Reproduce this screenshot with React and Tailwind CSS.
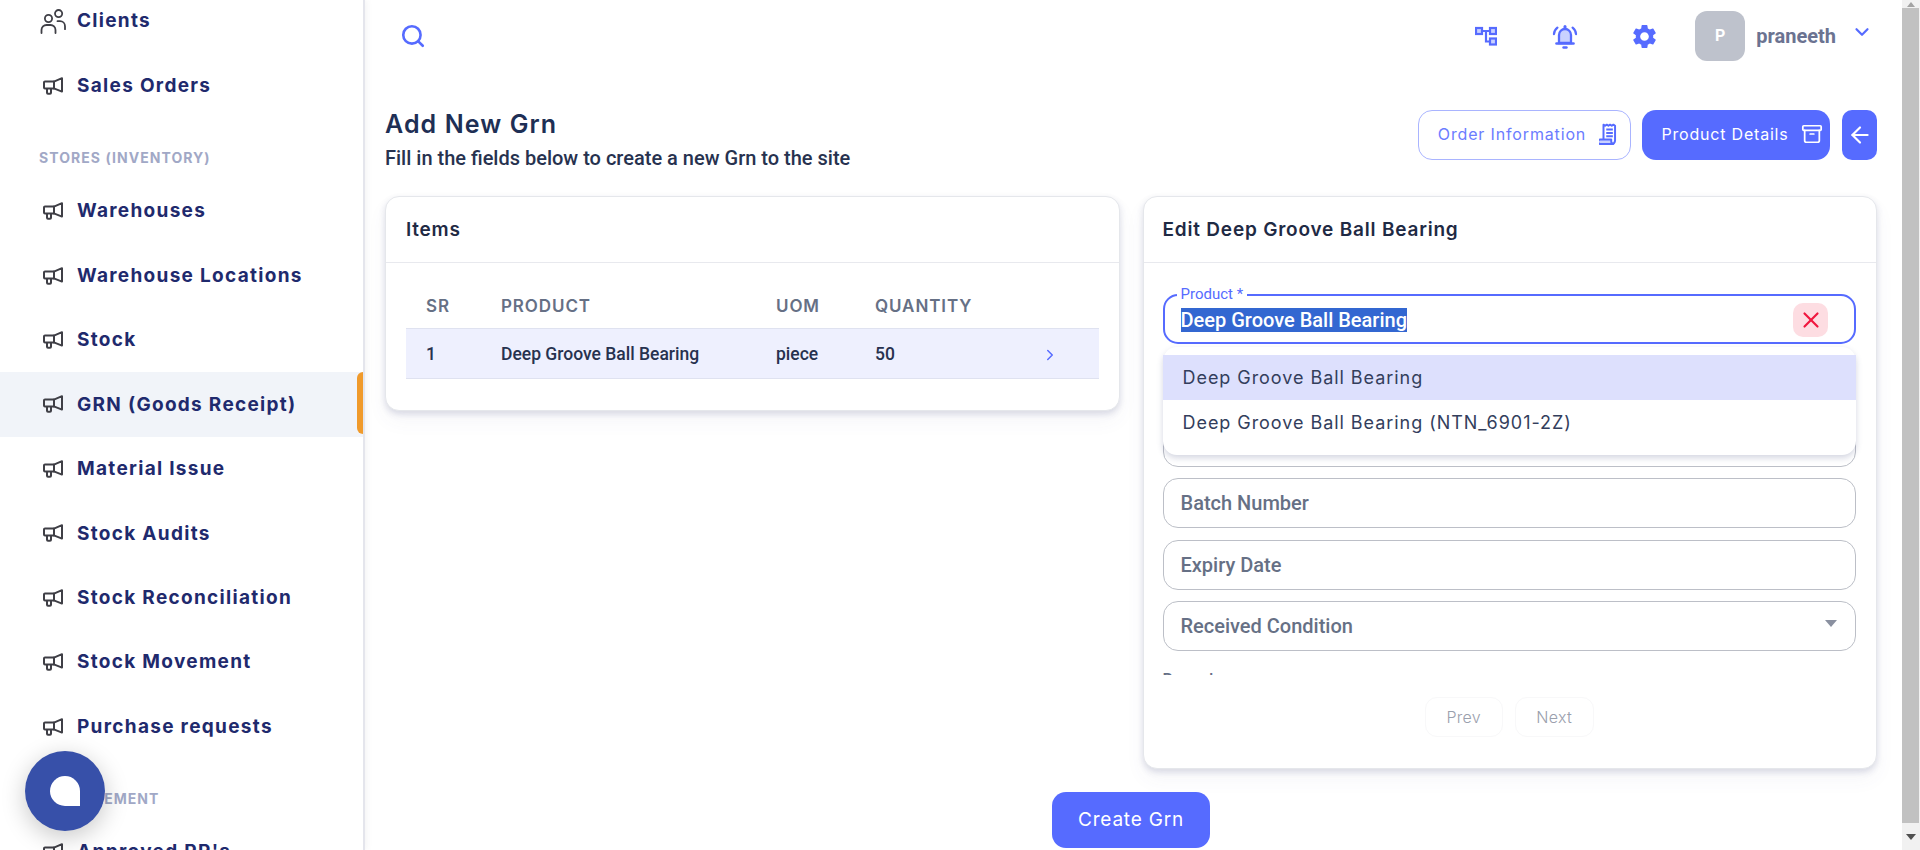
import React from "react";
import { Search, ChevronDown, ChevronRight, Archive, ArrowLeft, X } from "lucide-react";
import { MdSettings } from "react-icons/md";

const mont = "font-['Inter',sans-serif]";
const robo = "font-['Roboto',sans-serif]";

function Horn() {
  return (
    <svg width="20" height="18" viewBox="0 0 20 18" fill="none" stroke="#3f3f46" strokeWidth="2" strokeLinejoin="round" strokeLinecap="round">
      <path d="M19 1.2V14.6L11.5 11.6H2a1 1 0 0 1-1-1V5.4a1 1 0 0 1 1-1h9.5Z" />
      <path d="M11 4.6V11.4" />
      <path d="M4 12v3.8a1 1 0 0 0 1 1h2a1 1 0 0 0 1-1V12" />
    </svg>
  );
}

function People() {
  return (
    <svg width="26" height="26" viewBox="0 0 26 26" fill="none" stroke="#3f3f46" strokeWidth="1.8" strokeLinecap="round" className="-ml-[3px]">
      <circle cx="8.5" cy="10.5" r="3.6" />
      <circle cx="18.6" cy="5.6" r="3.6" />
      <path d="M1.5 25v-3a5 5 0 0 1 5-5h4a5 5 0 0 1 5 5v3" />
      <path d="M17.5 13.2h2.5a5 5 0 0 1 5 5v3" />
    </svg>
  );
}

function NavRow({ label, active, people }) {
  return (
    <div className={`relative flex h-[64.45px] items-center pl-[43px] ${active ? "bg-[#f1f4f9]" : ""}`}>
      <span className="flex w-[34px] shrink-0 items-center">{people ? <People /> : <Horn />}</span>
      <span className={`${mont} whitespace-nowrap pt-[1px] text-[19px] font-bold tracking-[1.3px] text-[#1f2a6d]`}>{label}</span>
      {active && <span className="absolute right-0 top-0 h-[62px] w-[6px] rounded-l-[6px] bg-[#f09a2b]" />}
    </div>
  );
}

function Heading({ children }) {
  return (
    <div className={`flex h-[61px] items-center pl-[39px] pt-[18px] ${mont} text-[14px] font-bold tracking-[1.05px] text-[#a1a8c6]`}>
      {children}
    </div>
  );
}

function Field({ label, caret }) {
  return (
    <div className="relative flex h-[50px] shrink-0 items-center rounded-[15px] border border-[#bcbfc7] bg-white px-[17px]">
      <span className={`${robo} text-[20px] font-medium text-[#667085]`}>{label}</span>
      {caret && <span className="absolute right-[18px] top-[18px] h-0 w-0 border-x-[6px] border-t-[7px] border-x-transparent border-t-[#8a90a0]" />}
    </div>
  );
}

export default function App() {
  const stores = ["Warehouses", "Warehouse Locations", "Stock"];
  const stores2 = ["Material Issue", "Stock Audits", "Stock Reconciliation", "Stock Movement", "Purchase requests"];
  return (
    <div className="relative flex h-[850px] w-full overflow-hidden bg-white">
      <aside className="w-[365px] shrink-0 overflow-hidden border-r-2 border-[#e4e5ec] bg-white shadow-[2px_0_6px_rgba(60,60,90,0.06)]">
        <div className="-mt-[11px]">
          <NavRow label="Clients" people />
          <NavRow label="Sales Orders" />
          <Heading>STORES (INVENTORY)</Heading>
          {stores.map((s) => <NavRow key={s} label={s} />)}
          <NavRow label="GRN (Goods Receipt)" active />
          {stores2.map((s) => <NavRow key={s} label={s} />)}
          <Heading>PROCUREMENT</Heading>
          <NavRow label="Approved PR's" />
        </div>
      </aside>

      <main className="min-w-0 flex-1 pl-[20px] pr-[25px]">
        <header className="flex h-[72px] items-center justify-between">
          <Search size={26} strokeWidth={2.4} className="ml-[15px] text-[#566bff]" />
          <div className="flex items-center">
            <svg width="22" height="20" viewBox="0 0 22 20" fill="none" stroke="#566bff" strokeWidth="2.2" className="mr-[55px]">
              <rect x="1" y="2" width="6" height="6" fill="#c9d1ff" />
              <rect x="15" y="2" width="6" height="6" fill="#c9d1ff" />
              <rect x="15" y="12.5" width="6" height="6" fill="#c9d1ff" />
              <path d="M7 5h8M11 5v10.5h4" />
            </svg>
            <svg width="26" height="28" viewBox="0 0 26 28" fill="none" stroke="#566bff" strokeWidth="2.3" strokeLinecap="round" className="mr-[52px]">
              <path d="M7 21V13a6 6 0 0 1 12 0v8Z" fill="#c9d1ff" />
              <path d="M4.5 21.5h17" strokeWidth="2.6" />
              <path d="M13 4.5V5.5" strokeWidth="3" />
              <path d="M11.5 25.5h3" strokeWidth="2.4" />
              <path d="M2 12a9 9 0 0 1 3.4-6.4M24 12a9 9 0 0 0-3.4-6.4" />
            </svg>
            <MdSettings size={29} className="mr-[36px] text-[#566bff]" />
            <div className={`mr-[11px] flex h-[50px] w-[50px] items-center justify-center rounded-[12px] bg-[#bec2cc] ${robo} text-[16px] font-bold text-white`}>P</div>
            <span className={`${robo} mr-[15px] text-[20px] font-bold leading-none text-[#6b7391]`}>praneeth</span>
            <ChevronDown size={22} strokeWidth={2.4} className="mb-[9px] mr-[4px] text-[#566bff]" />
          </div>
        </header>

        <section className="flex h-[124px] items-start justify-between">
          <div className="pt-[36px]">
            <h1 className={`${mont} text-[25px] font-semibold leading-[32px] tracking-[1.1px] text-[#1e2f55]`}>Add New Grn</h1>
            <p className={`${robo} mt-[4px] text-[20px] font-medium leading-[28px] text-[#27324f]`}>Fill in the fields below to create a new Grn to the site</p>
          </div>
          <div className="flex items-center pt-[38px]">
            <button className={`mr-[11px] flex h-[50px] w-[213px] items-center justify-center gap-[13px] rounded-[14px] border border-[#a9b4ff] bg-white pb-[2px] pl-[8px] ${mont} text-[16px] tracking-[0.85px] text-[#6b7cff]`}>
              Order Information
              <svg width="20" height="22" viewBox="0 0 18 20" fill="none" stroke="#566bff" strokeWidth="1.8" strokeLinejoin="round">
                <path d="M4 15V1.5l1.5 1 1.5-1 1.5 1 1.5-1 1.5 1 1.5-1 1.5 1V16a3 3 0 0 1-3 3H3.5" />
                <path d="M1 19a2 2 0 0 1 0-4h10v1.5a2.5 2.5 0 0 0 2 2.5Z" fill="#c9d1ff" />
                <path d="M6.5 6h6M6.5 9h6M6.5 12h6" />
              </svg>
            </button>
            <button className={`mr-[12px] flex h-[50px] w-[188px] items-center justify-center gap-[12px] rounded-[14px] bg-[#566bff] pb-[2px] pl-[12px] ${mont} text-[16px] tracking-[0.8px] text-white`}>
              Product Details
              <Archive size={22} strokeWidth={1.9} />
            </button>
            <button className="flex h-[50px] w-[35px] items-center justify-center rounded-[10px] bg-[#566bff] text-white">
              <ArrowLeft size={26} strokeWidth={2} />
            </button>
          </div>
        </section>

        <section className="grid grid-cols-2 items-start gap-[23px]">
          <div className="rounded-[14px] border border-[#e5e7eb] bg-white shadow-[0_3px_6px_rgba(70,80,130,0.18),0_10px_20px_rgba(70,80,130,0.05)]">
            <div className="flex h-[66px] items-center border-b border-[#e8e9ee] px-[20px] pt-[1px]">
              <h2 className={`${mont} text-[19px] font-semibold tracking-[0.75px] text-[#1f2a44]`}>Items</h2>
            </div>
            <div className="px-[20px] pb-[31px] pt-[22px]">
              <div className={`grid h-[43px] grid-cols-[95px_275px_99px_1fr] items-center ${mont} text-[17px] font-semibold tracking-[0.9px] text-[#667085]`}>
                <span className="pl-[20px]">SR</span>
                <span>PRODUCT</span>
                <span>UOM</span>
                <span>QUANTITY</span>
              </div>
              <div className={`grid h-[51px] grid-cols-[95px_275px_99px_166px_1fr] items-center border-y border-[#dfe2f0] bg-[#eef0fe] pt-[2px] ${robo} text-[17.5px] font-medium text-[#27324f]`}>
                <span className="pl-[20px]">1</span>
                <span>Deep Groove Ball Bearing</span>
                <span>piece</span>
                <span>50</span>
                <ChevronRight size={18} strokeWidth={2} className="text-[#566bff]" />
              </div>
            </div>
          </div>

          <div className="rounded-[14px] border border-[#e5e7eb] bg-white shadow-[0_3px_6px_rgba(70,80,130,0.18),0_10px_20px_rgba(70,80,130,0.05)]">
            <div className="flex h-[66px] items-center border-b border-[#e8e9ee] px-[19px] pt-[1px]">
              <h2 className={`${mont} whitespace-nowrap text-[19px] font-semibold tracking-[0.8px] text-[#1f2a44]`}>Edit Deep Groove Ball Bearing</h2>
            </div>
            <div className="pl-[19px] pr-[20px] pt-[21px]">
              <div className="-mx-[10px] flex h-[391px] flex-col gap-[11.4px] overflow-hidden px-[10px] pt-[10px]">
                <div className="relative shrink-0">
                  <div className="flex h-[50px] items-center rounded-[15px] border-2 border-[#566bff] bg-white px-[16px] pt-[1px]">
                    <span className={`${robo} bg-[#3367d1] text-[20px] font-medium leading-[24px] text-white`}>Deep Groove Ball Bearing</span>
                  </div>
                  <span className={`absolute left-[14px] top-[-8px] bg-white px-[4px] ${robo} text-[15px] leading-[16px] text-[#566bff]`}>Product *</span>
                  <span className="absolute right-[28px] top-[9px] flex h-[34px] w-[35px] items-center justify-center rounded-[10px] bg-[#fddde2] text-[#f0173f]">
                    <X size={26} strokeWidth={2} />
                  </span>
                  <div className={`absolute left-0 right-0 top-[53px] z-10 rounded-[14px] bg-white pb-[10px] pt-[8px] shadow-[0_3px_6px_rgba(60,70,120,0.22)] ${mont} text-[18px] tracking-[0.95px] text-[#333e5c]`}>
                    <div className="flex h-[45px] items-center bg-[#dde0fd] px-[20px]">Deep Groove Ball Bearing</div>
                    <div className="flex h-[45px] items-center px-[20px]">Deep Groove Ball Bearing (NTN_6901-2Z)</div>
                  </div>
                </div>
                <Field label="" />
                <Field label="" />
                <Field label="Batch Number" />
                <Field label="Expiry Date" />
                <Field label="Received Condition" caret />
                <span className={`${robo} shrink-0 pt-[6px] text-[16px] font-medium leading-[24px] text-[#667085]`}>Remarks</span>
              </div>
              <div className="flex justify-center gap-[12px] pb-[31px] pt-[22px]">
                <span className={`flex h-[40px] w-[78px] items-center justify-center rounded-[12px] border border-[#f8f8f9] ${mont} text-[16px] font-light tracking-[0.3px] text-[#9aa0ad]`}>Prev</span>
                <span className={`flex h-[40px] w-[79px] items-center justify-center rounded-[12px] border border-[#f8f8f9] ${mont} text-[16px] font-light tracking-[0.3px] text-[#9aa0ad]`}>Next</span>
              </div>
            </div>
          </div>
        </section>

        <div className="mt-[23px] flex justify-center">
          <button className={`h-[56px] w-[158px] rounded-[14px] bg-[#566bff] ${mont} text-[19px] tracking-[0.8px] text-white`}>Create Grn</button>
        </div>
      </main>

      <div className="relative flex w-[18px] shrink-0 flex-col bg-[#f1f1f1]">
        <div className="flex h-[8px] items-start justify-center pt-[2px]"><span className="h-0 w-0 border-x-[4px] border-b-[5px] border-x-transparent border-b-[#a3a3a3]" /></div>
        <div className="h-[815px] w-[17px] bg-[#c1c1c1]" />
        <div className="flex flex-1 items-center justify-center"><span className="h-0 w-0 border-x-[5px] border-t-[6px] border-x-transparent border-t-[#505050]" /></div>
      </div>

      <div className="absolute left-[25px] top-[751px] flex h-[80px] w-[80px] items-center justify-center rounded-full bg-[#3750a9] shadow-[0_6px_24px_rgba(0,0,0,0.22)]">
        <span className="h-[30px] w-[30px] rounded-t-full rounded-bl-full bg-white" />
      </div>
    </div>
  );
}
